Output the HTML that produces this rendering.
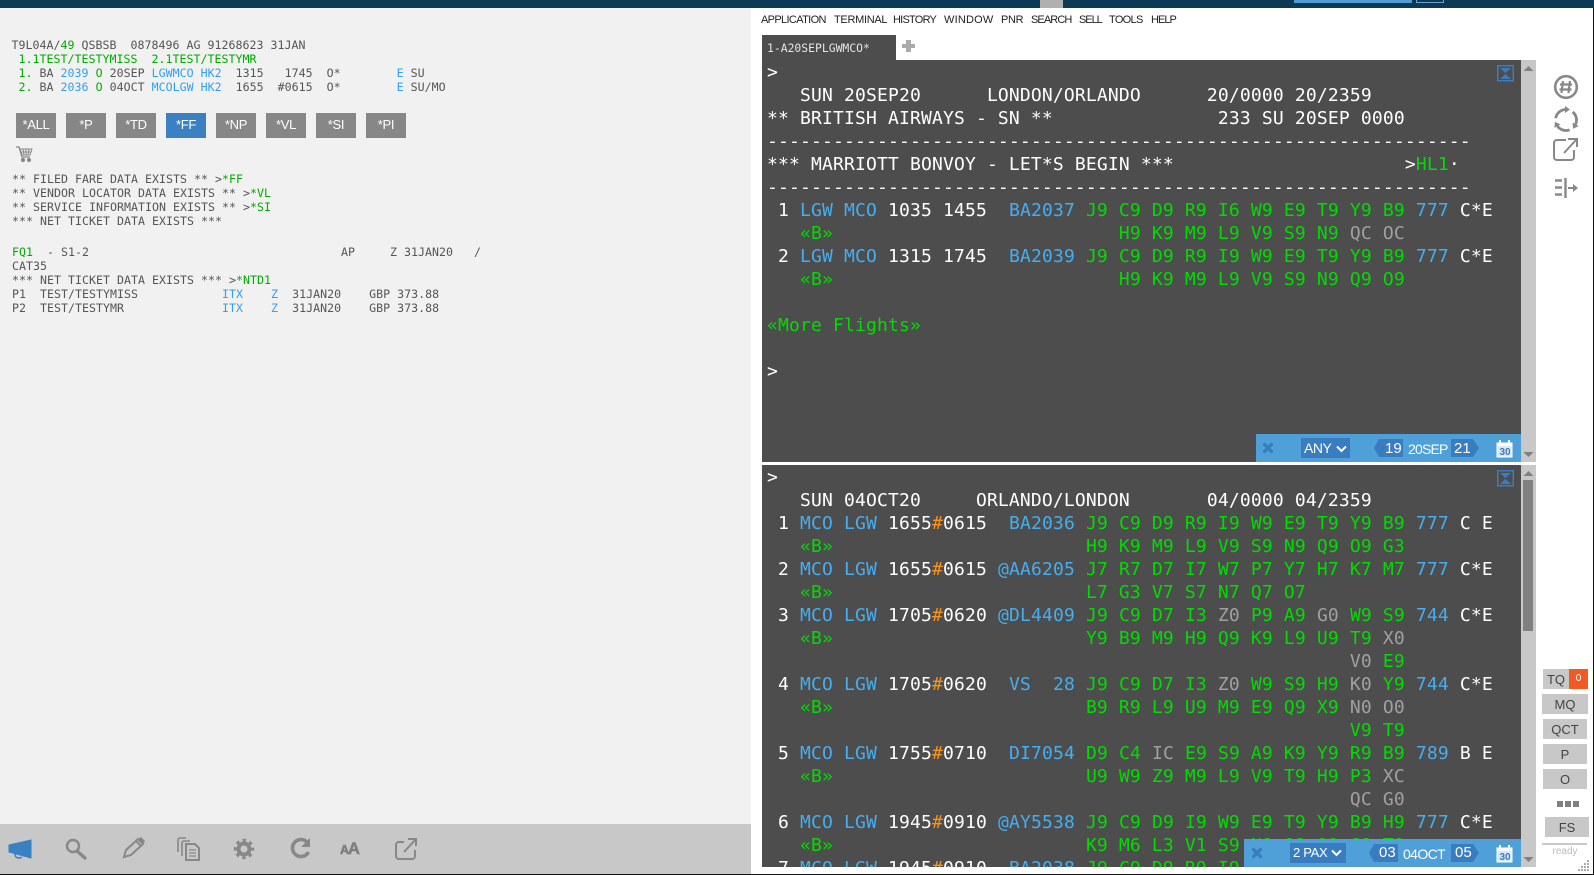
<!DOCTYPE html>
<html><head><meta charset="utf-8"><title>Terminal</title>
<style>
html,body{margin:0;padding:0;width:1594px;height:875px;overflow:hidden;background:#fff}
body{position:relative;font-family:"Liberation Sans",sans-serif}
.a{position:absolute}
pre{margin:0;position:absolute;white-space:pre;font-family:"DejaVu Sans Mono","Liberation Mono",monospace}
.t{left:767px;font-size:18px;letter-spacing:.16px;line-height:23px;color:#fff}
.l{left:12px;font-size:11.6px;line-height:14px;color:#555;letter-spacing:.02px}
.l .g{color:#0a0}.l .b{color:#2f9ff0}
.t .g{color:#00dc00}.t .b{color:#45aef0}.t .y{color:#a0a0a0}.t .o{color:#f7941d}
.btn{position:absolute;top:113px;width:40px;height:25px;background:#878787;color:#fff;font-size:13px;letter-spacing:-.3px;line-height:24px;text-align:center}
.m{position:absolute;top:13px;font-size:11px;line-height:14px;color:#222;white-space:pre}
.s{position:absolute;background:#c8c8c8;color:#444;font-size:13px;text-align:center;height:20px;line-height:21px}
.d{position:absolute;background:#3a7cc0;color:#fff;font-size:14px;text-align:center}
.x{position:absolute;color:#fff;font-size:14px;white-space:pre}
</style></head><body>
<div class="a" style="left:0;top:0;width:1594px;height:8px;background:#0c3a55"></div>
<div class="a" style="left:1040px;top:0;width:23px;height:8px;background:#b0b0b0"></div>
<div class="a" style="left:1294px;top:0;width:118px;height:3px;background:#4f9bd4"></div>
<div class="a" style="left:1416px;top:0;width:26px;height:2px;border:1px solid #6aa6d4;border-top:0"></div>

<div class="a" style="left:0;top:8px;width:751px;height:816px;background:#f1f1f1"></div>
<div class="a" style="left:0;top:824px;width:751px;height:50px;background:#c8c8c8"></div>
<div class="a" style="left:0;top:874px;width:1594px;height:1px;background:#111"></div>
<div class="a" style="left:1593px;top:8px;width:1px;height:867px;background:#111"></div>

<pre class="l" style="top:38px;left:11.5px">T9L04A/<span class="g">49</span> QSBSB  0878496 AG 91268623 31JAN
<span class="g"> 1.1TEST/TESTYMISS  2.1TEST/TESTYMR</span>
<span class="g"> 1.</span> BA <span class="b">2039</span> <span class="g">O</span> 20SEP <span class="b">LGWMCO HK2</span>  1315   1745  O*        <span class="b">E</span> SU
<span class="g"> 2.</span> BA <span class="b">2036</span> <span class="g">O</span> 04OCT <span class="b">MCOLGW HK2</span>  1655  #0615  O*        <span class="b">E</span> SU/MO</pre>

<div class="btn" style="left:16px">*ALL</div>
<div class="btn" style="left:66px">*P</div>
<div class="btn" style="left:116px">*TD</div>
<div class="btn" style="left:166px;background:#3a81c4">*FF</div>
<div class="btn" style="left:216px">*NP</div>
<div class="btn" style="left:266px">*VL</div>
<div class="btn" style="left:316px">*SI</div>
<div class="btn" style="left:366px">*PI</div>

<svg class="a" style="left:15px;top:145px" width="18" height="18" viewBox="0 0 18 18" fill="none" stroke="#888"><path d="M1 2h3l3 10h8" stroke-width="1.3"/><path d="M5 4h12l-2 6H7zM8 4l1 6M11 4v6M14 4l-1 6M6 7h10" stroke-width="1"/><circle cx="8" cy="15" r="1.6" fill="#888"/><circle cx="14" cy="15" r="1.6" fill="#888"/></svg>

<pre class="l" style="top:172px">** FILED FARE DATA EXISTS ** &gt;<span class="g">*FF</span>
** VENDOR LOCATOR DATA EXISTS ** &gt;<span class="g">*VL</span>
** SERVICE INFORMATION EXISTS ** &gt;<span class="g">*SI</span>
*** NET TICKET DATA EXISTS ***</pre>
<pre class="l" style="top:245px"><span class="g">FQ1</span>  - S1-2                                    AP     Z 31JAN20   /
CAT35
*** NET TICKET DATA EXISTS *** &gt;<span class="g">*NTD1</span>
P1  TEST/TESTYMISS            <span class="b">ITX</span>    <span class="b">Z</span>  31JAN20    GBP 373.88
P2  TEST/TESTYMR              <span class="b">ITX</span>    <span class="b">Z</span>  31JAN20    GBP 373.88</pre>

<!-- bottom left icons -->
<svg class="a" style="left:0;top:824px" width="430" height="50" viewBox="0 824 430 50" fill="none" stroke="#888">
<path d="M9 845l22-5v18l-22-6z" fill="#3a81c4" stroke="#3a81c4" stroke-width="1"/><path d="M15 854c0 4 4 5 7 3" stroke="#3a81c4" stroke-width="1.5"/>
<circle cx="73" cy="846" r="6" stroke-width="2.4"/><path d="M77 851l8 7" stroke-width="3.4" stroke-linecap="round"/>
<path d="M124 857l2-7 12-11 5 5-12 11z" stroke-width="2"/><path d="M136 841l5 5" stroke-width="2"/><path d="M138 839l3-2 4 4-2 3z" fill="#888" stroke="none"/>
<path d="M178 852v-12a2 2 0 0 1 2-2h6" stroke-width="1.6"/><path d="M182 856v-13a2 2 0 0 1 2-2h6" stroke-width="1.6"/><path d="M186 844h9l4 4v12h-13z" stroke-width="2"/><path d="M189 850h7M189 853h7M189 856h7" stroke-width="1.3"/>
<circle cx="244" cy="849" r="5.5" stroke-width="4"/><circle cx="244" cy="849" r="8.5" stroke-width="3.4" stroke-dasharray="3.3 3.38" stroke-dashoffset="1.65"/>
<path d="M307 842a8.5 8.5 0 1 0 1.5 10" stroke-width="3.6"/><path d="M310 838v9h-9z" fill="#888" stroke="none"/>
<path d="M404 842h-5a3 3 0 0 0-3 3v11a3 3 0 0 0 3 3h13a3 3 0 0 0 3-3v-6" stroke-width="2"/><path d="M404 852l12-13M408 839h8v7" stroke-width="2"/>
</svg>
<div class="a" style="left:340px;top:840px;color:#808080;font-weight:bold;font-size:16.5px;line-height:18px;letter-spacing:-1px;white-space:pre;-webkit-text-stroke:.6px #808080"><span style="font-size:12.5px">A</span>A</div>

<!-- menu -->
<span class="m" style="left:761px;letter-spacing:-.65px">APPLICATION</span>
<span class="m" style="left:834px;letter-spacing:-.3px">TERMINAL</span>
<span class="m" style="left:893px;letter-spacing:-.77px">HISTORY</span>
<span class="m" style="left:944px;letter-spacing:.2px">WINDOW</span>
<span class="m" style="left:1001px;letter-spacing:-.3px">PNR</span>
<span class="m" style="left:1031px;letter-spacing:-.9px">SEARCH</span>
<span class="m" style="left:1079px;letter-spacing:-1.05px">SELL</span>
<span class="m" style="left:1109px;letter-spacing:-.7px">TOOLS</span>
<span class="m" style="left:1151px;letter-spacing:-.95px">HELP</span>

<div class="a" style="left:762px;top:35px;width:134px;height:25px;background:#4d4d4d"></div>
<pre class="a" style="left:767px;top:41px;font-size:11.4px;line-height:14px;color:#e4e4e4">1-A20SEPLGWMCO*</pre>
<div class="a" style="left:902px;top:44px;width:13px;height:4px;background:#aaa"></div>
<div class="a" style="left:906px;top:40px;width:5px;height:12px;background:#aaa"></div>

<!-- terminals -->
<div class="a" style="left:762px;top:60px;width:759px;height:402px;background:#4d4d4d;overflow:hidden">
<pre class="t" style="left:5px;top:.5px">&gt;
   SUN 20SEP20      LONDON/ORLANDO      20/0000 20/2359
** BRITISH AIRWAYS - SN **               233 SU 20SEP 0000
----------------------------------------------------------------
*** MARRIOTT BONVOY - LET*S BEGIN ***                     &gt;<span class="g">HL1</span>·
----------------------------------------------------------------
 1 <span class="b">LGW MCO</span> 1035 1455  <span class="b">BA2037</span> <span class="g">J9 C9 D9 R9 I6 W9 E9 T9 Y9 B9</span> <span class="b">777</span> C*E
   <span class="g">«B»</span>                          <span class="g">H9 K9 M9 L9 V9 S9 N9</span> <span class="y">QC OC</span>
 2 <span class="b">LGW MCO</span> 1315 1745  <span class="b">BA2039</span> <span class="g">J9 C9 D9 R9 I9 W9 E9 T9 Y9 B9</span> <span class="b">777</span> C*E
   <span class="g">«B»</span>                          <span class="g">H9 K9 M9 L9 V9 S9 N9 Q9 O9</span>

<span class="g">«More Flights»</span>

&gt;</pre>
</div>
<div class="a" style="left:762px;top:465px;width:759px;height:402px;background:#4d4d4d;overflow:hidden">
<pre class="t" style="left:5px;top:.5px">&gt;
   SUN 04OCT20     ORLANDO/LONDON       04/0000 04/2359
 1 <span class="b">MCO LGW</span> 1655<span class="o">#</span>0615  <span class="b">BA2036</span> <span class="g">J9 C9 D9 R9 I9 W9 E9 T9 Y9 B9</span> <span class="b">777</span> C E
   <span class="g">«B»</span>                       <span class="g">H9 K9 M9 L9 V9 S9 N9 Q9 O9 G3</span>
 2 <span class="b">MCO LGW</span> 1655<span class="o">#</span>0615 <span class="b">@AA6205</span> <span class="g">J7 R7 D7 I7 W7 P7 Y7 H7 K7 M7</span> <span class="b">777</span> C*E
   <span class="g">«B»</span>                       <span class="g">L7 G3 V7 S7 N7 Q7 O7</span>
 3 <span class="b">MCO LGW</span> 1705<span class="o">#</span>0620 <span class="b">@DL4409</span> <span class="g">J9 C9 D7 I3</span> <span class="y">Z0</span> <span class="g">P9 A9</span> <span class="y">G0</span> <span class="g">W9 S9</span> <span class="b">744</span> C*E
   <span class="g">«B»</span>                       <span class="g">Y9 B9 M9 H9 Q9 K9 L9 U9 T9</span> <span class="y">X0</span>
                                                     <span class="y">V0</span> <span class="g">E9</span>
 4 <span class="b">MCO LGW</span> 1705<span class="o">#</span>0620  <span class="b">VS  28</span> <span class="g">J9 C9 D7 I3</span> <span class="y">Z0</span> <span class="g">W9 S9 H9</span> <span class="y">K0</span> <span class="g">Y9</span> <span class="b">744</span> C*E
   <span class="g">«B»</span>                       <span class="g">B9 R9 L9 U9 M9 E9 Q9 X9</span> <span class="y">N0 O0</span>
                                                     <span class="g">V9 T9</span>
 5 <span class="b">MCO LGW</span> 1755<span class="o">#</span>0710  <span class="b">DI7054</span> <span class="g">D9 C4</span> <span class="y">IC</span> <span class="g">E9 S9 A9 K9 Y9 R9 B9</span> <span class="b">789</span> B E
   <span class="g">«B»</span>                       <span class="g">U9 W9 Z9 M9 L9 V9 T9 H9 P3</span> <span class="y">XC</span>
                                                     <span class="y">QC G0</span>
 6 <span class="b">MCO LGW</span> 1945<span class="o">#</span>0910 <span class="b">@AY5538</span> <span class="g">J9 C9 D9 I9 W9 E9 T9 Y9 B9 H9</span> <span class="b">777</span> C*E
   <span class="g">«B»</span>                       <span class="g">K9 M6 L3 V1 S9 N9 Q9 O9 G9 T9</span>
 7 <span class="b">MCO LGW</span> 1945<span class="o">#</span>0910  <span class="b">BA2038</span> <span class="g">J9 C9 D9 R9 I9 W9 E9 T9 Y9 B9</span></pre>
</div>

<!-- hourglass icons -->
<svg class="a" style="left:1497px;top:65px" width="17" height="17" viewBox="0 0 17 17"><rect x=".75" y=".75" width="15.5" height="15" fill="none" stroke="#3a7cc0" stroke-width="1.5"/><path d="M3 3h11l-5.500 5zM3 14h11l-5.500-5z" fill="#3a7cc0"/></svg>
<svg class="a" style="left:1497px;top:470px" width="17" height="17" viewBox="0 0 17 17"><rect x=".75" y=".75" width="15.500" height="15" fill="none" stroke="#3a7cc0" stroke-width="1.5"/><path d="M3 3h11l-5.500 5zM3 14h11l-5.500-5z" fill="#3a7cc0"/></svg>

<!-- scrollbars -->
<div class="a" style="left:1521px;top:60px;width:15px;height:402px;background:#c8c8c8"></div>
<div class="a" style="left:1521px;top:462px;width:15px;height:3px;background:#fff"></div>
<div class="a" style="left:1521px;top:465px;width:15px;height:402px;background:#c8c8c8"></div>
<div class="a" style="left:1523px;top:480px;width:10px;height:151px;background:#808080"></div>
<svg class="a" style="left:1521px;top:60px" width="15" height="807" viewBox="0 0 15 807" fill="#808080"><path d="M2.500 11L7.500 6l5 5zM2.500 392l5 5 5-5zM2.500 416l5-5 5 5zM2.500 797l5 5 5-5z"/></svg>

<!-- floating bar 1 -->
<div class="a" style="left:1256px;top:434px;width:265px;height:28px;background:#4f9fd8"></div>
<svg class="a" style="left:1262px;top:442px" width="12" height="12" viewBox="0 0 12 12"><path d="M1.500 1.500l9 9M10.500 1.500l-9 9" stroke="#3a7cc0" stroke-width="3.200" fill="none"/></svg>
<div class="d" style="left:1301px;top:438px;width:49px;height:20px;line-height:20px;text-align:left;text-indent:3px;letter-spacing:-.5px">ANY</div>
<svg class="a" style="left:1336px;top:445px" width="11" height="8" viewBox="0 0 11 8"><path d="M1 1.500l4.500 4.500 4.500-4.500" fill="none" stroke="#fff" stroke-width="2"/></svg>
<svg class="a" style="left:1374px;top:439px" width="110" height="18" viewBox="0 0 110 18" fill="#3a7cc0"><path d="M5 0h24v18H5L0 9zM77 0h22l6 9-6 9H77z"/></svg>
<div class="x" style="left:1385px;top:440px;font-size:15px;line-height:18px">19</div>
<div class="x" style="left:1408px;top:440px;font-size:14px;line-height:18px;letter-spacing:-.8px">20SEP</div>
<div class="x" style="left:1454px;top:440px;font-size:15px;line-height:18px">21</div>
<svg class="a" style="left:1496px;top:440px" width="17" height="18" viewBox="0 0 17 18"><path d="M1 3h15v14H1z" fill="#dbe9f5" stroke="#fff"/><path d="M1 3h15v3H1z" fill="#fff"/><path d="M4 0v3M13 0v3" stroke="#fff" stroke-width="2"/></svg>
<div class="a" style="left:1498px;top:447.500px;width:14px;text-align:center;font-size:10px;line-height:10px;font-weight:bold;color:#3a7cc0">30</div>

<!-- floating bar 2 -->
<div class="a" style="left:1244px;top:839px;width:277px;height:28px;background:#4f9fd8"></div>
<svg class="a" style="left:1251px;top:847px" width="12" height="12" viewBox="0 0 12 12"><path d="M1.500 1.500l9 9M10.500 1.500l-9 9" stroke="#3a7cc0" stroke-width="3.200" fill="none"/></svg>
<div class="d" style="left:1290px;top:843px;width:56px;height:20px;line-height:20px;text-align:left;text-indent:3px;font-size:13px;letter-spacing:-.3px">2 PAX</div>
<svg class="a" style="left:1331px;top:849px" width="11" height="8" viewBox="0 0 11 8"><path d="M1 1.500l4.500 4.500 4.500-4.500" fill="none" stroke="#fff" stroke-width="2"/></svg>
<svg class="a" style="left:1369px;top:844px" width="110" height="18" viewBox="0 0 110 18" fill="#3a7cc0"><path d="M5 0h24v18H5L0 9zM82 0h22l6 9-6 9H82z"/></svg>
<div class="x" style="left:1379px;top:844px;font-size:15px;line-height:18px">03</div>
<div class="x" style="left:1403px;top:845px;font-size:14px;line-height:18px;letter-spacing:-.6px">04OCT</div>
<div class="x" style="left:1455px;top:844px;font-size:15px;line-height:18px">05</div>
<svg class="a" style="left:1496px;top:845px" width="17" height="18" viewBox="0 0 17 18"><path d="M1 3h15v14H1z" fill="#dbe9f5" stroke="#fff"/><path d="M1 3h15v3H1z" fill="#fff"/><path d="M4 0v3M13 0v3" stroke="#fff" stroke-width="2"/></svg>
<div class="a" style="left:1498px;top:852.500px;width:14px;text-align:center;font-size:10px;line-height:10px;font-weight:bold;color:#3a7cc0">30</div>

<!-- side icons -->
<svg class="a" style="left:1550px;top:70px" width="34" height="132" viewBox="1550 70 34 132" fill="none" stroke="#888">
<circle cx="1566" cy="87" r="10.800" stroke-width="2.600"/><path d="M1563 81l-1.500 12M1570 81l-1.500 12M1560 84.500h12M1559.500 89.500h12" stroke-width="2.200"/>
<g><path d="M1555.700 118.200A10.500 10.500 0 0 1 1565.100 109.500" stroke-width="2.800"/><path d="M1565 106l5 3.500-5 3.500z" fill="#888" stroke="none"/></g>
<g transform="rotate(120 1566 120)"><path d="M1555.700 118.200A10.500 10.500 0 0 1 1565.100 109.500" stroke-width="2.800"/><path d="M1565 106l5 3.500-5 3.500z" fill="#888" stroke="none"/></g>
<g transform="rotate(240 1566 120)"><path d="M1555.700 118.200A10.500 10.500 0 0 1 1565.100 109.500" stroke-width="2.800"/><path d="M1565 106l5 3.500-5 3.500z" fill="#888" stroke="none"/></g>
<path d="M1566 140h-9a3 3 0 0 0-3 3v14a3 3 0 0 0 3 3h14a3 3 0 0 0 3-3v-7" stroke-width="2"/><path d="M1564 153l12-13M1568 139h9v8" stroke-width="2"/>
<path d="M1555 180.500h7M1555 187.500h7M1555 194.500h7" stroke-width="2.400"/><path d="M1565.500 178v20" stroke-width="2.400"/><path d="M1568 188h6" stroke-width="2"/><path d="M1573 184l5 4-5 4z" fill="#888" stroke="none"/>
</svg>

<!-- side buttons -->
<div class="s" style="left:1543px;top:669px;width:26px">TQ</div>
<div class="a" style="left:1569px;top:669px;width:19px;height:20px;background:#f15a22;color:#fff;font-size:10px;line-height:20px;text-align:center">0</div>
<div class="s" style="left:1542px;top:694px;width:46px">MQ</div>
<div class="s" style="left:1543px;top:719px;width:44px">QCT</div>
<div class="s" style="left:1543px;top:744px;width:44px">P</div>
<div class="s" style="left:1543px;top:769px;width:44px">O</div>
<div class="a" style="left:1557px;top:801px;width:6px;height:6px;background:#808080"></div>
<div class="a" style="left:1565px;top:801px;width:6px;height:6px;background:#808080"></div>
<div class="a" style="left:1573px;top:801px;width:6px;height:6px;background:#808080"></div>
<div class="s" style="left:1545px;top:817px;width:44px">FS</div>
<div class="a" style="left:1542px;top:843px;width:45px;height:2px;background:#c8c8c8"></div>
<div class="a" style="left:1542px;top:845px;width:46px;text-align:center;font-size:10px;line-height:14px;color:#bbb">ready</div>
<svg class="a" style="left:1578px;top:860px" width="12" height="12" viewBox="0 0 12 12" fill="#aaa"><path d="M9 0h2v2H9zM9 3h2v2H9zM6 3h2v2H6zM9 6h2v2H9zM6 6h2v2H6zM3 6h2v2H3zM9 9h2v2H9zM6 9h2v2H6zM3 9h2v2H3zM0 9h2v2H0z"/></svg>
</body></html>
